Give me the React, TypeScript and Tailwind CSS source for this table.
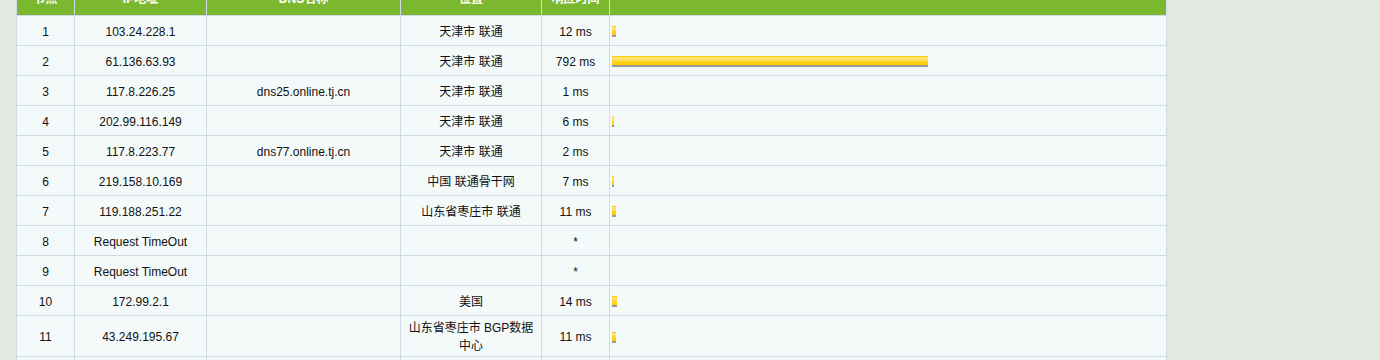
import React from 'react';

type Hop = { id: number; ip: string; dns: string; loc: string; ms: number | null };

const hops: Hop[] = [
  { id: 1, ip: '103.24.228.1', dns: '', loc: '天津市 联通', ms: 12 },
  { id: 2, ip: '61.136.63.93', dns: '', loc: '天津市 联通', ms: 792 },
  { id: 3, ip: '117.8.226.25', dns: 'dns25.online.tj.cn', loc: '天津市 联通', ms: 1 },
  { id: 4, ip: '202.99.116.149', dns: '', loc: '天津市 联通', ms: 6 },
  { id: 5, ip: '117.8.223.77', dns: 'dns77.online.tj.cn', loc: '天津市 联通', ms: 2 },
  { id: 6, ip: '219.158.10.169', dns: '', loc: '中国 联通骨干网', ms: 7 },
  { id: 7, ip: '119.188.251.22', dns: '', loc: '山东省枣庄市 联通', ms: 11 },
  { id: 8, ip: 'Request TimeOut', dns: '', loc: '', ms: null },
  { id: 9, ip: 'Request TimeOut', dns: '', loc: '', ms: null },
  { id: 10, ip: '172.99.2.1', dns: '', loc: '美国', ms: 14 },
  { id: 11, ip: '43.249.195.67', dns: '', loc: '山东省枣庄市 BGP数据中心', ms: 11 },
  { id: 12, ip: '', dns: '', loc: '', ms: null },
];

const cell = 'border border-[#cfdbe9] px-[6px] pt-[3px] pb-[1px] text-center align-middle';
const head = 'border border-[#cfdbe9] px-[6px] pt-0 pb-[3px] text-center align-middle';

function Bar({ ms }: { ms: number }) {
  const w = Math.floor(ms * 0.4);
  if (w < 1) return null;
  return (
    <div
      className="h-[11px] mt-[2px] border-t border-b-2 border-t-[#ffcc00] border-b-[#9a9a9a] bg-[linear-gradient(to_bottom,#ffe680_0%,#ffe066_30%,#ffd21a_60%,#ffc800_100%)]"
      style={{ width: w }}
    />
  );
}

export default function App() {
  return (
    <div className="h-[360px] overflow-hidden bg-[#e3e8e2] font-['Liberation_Sans','Noto_Sans_CJK_SC',sans-serif] text-[12px] text-[#111]">
      <table className="ml-4 -mt-[15px] w-[1151px] table-fixed border-collapse bg-[#f4fafa] leading-[18px]">
        <colgroup>
          <col className="w-[58px]" />
          <col className="w-[132px]" />
          <col className="w-[194px]" />
          <col className="w-[141px]" />
          <col className="w-[68px]" />
          <col />
        </colgroup>
        <thead>
          <tr className="h-[30px] bg-[#7cb82f] text-white font-bold">
            <th className={head}>节点</th>
            <th className={head}>IP地址</th>
            <th className={head}>DNS名称</th>
            <th className={head}>位置</th>
            <th className={head}>响应时间</th>
            <th className={head}></th>
          </tr>
        </thead>
        <tbody>
          {hops.map((h) => (
            <tr key={h.id} className="h-[30px]">
              <td className={cell}>{h.id}</td>
              <td className={cell}>{h.ip}</td>
              <td className={cell}>{h.dns}</td>
              <td className={cell}>{h.loc}</td>
              <td className={cell}>{h.ms === null ? (h.ip ? '*' : '') : `${h.ms} ms`}</td>
              <td className="border border-[#cfdbe9] pl-[2px] align-middle">{h.ms !== null && <Bar ms={h.ms} />}</td>
            </tr>
          ))}
        </tbody>
      </table>
    </div>
  );
}
